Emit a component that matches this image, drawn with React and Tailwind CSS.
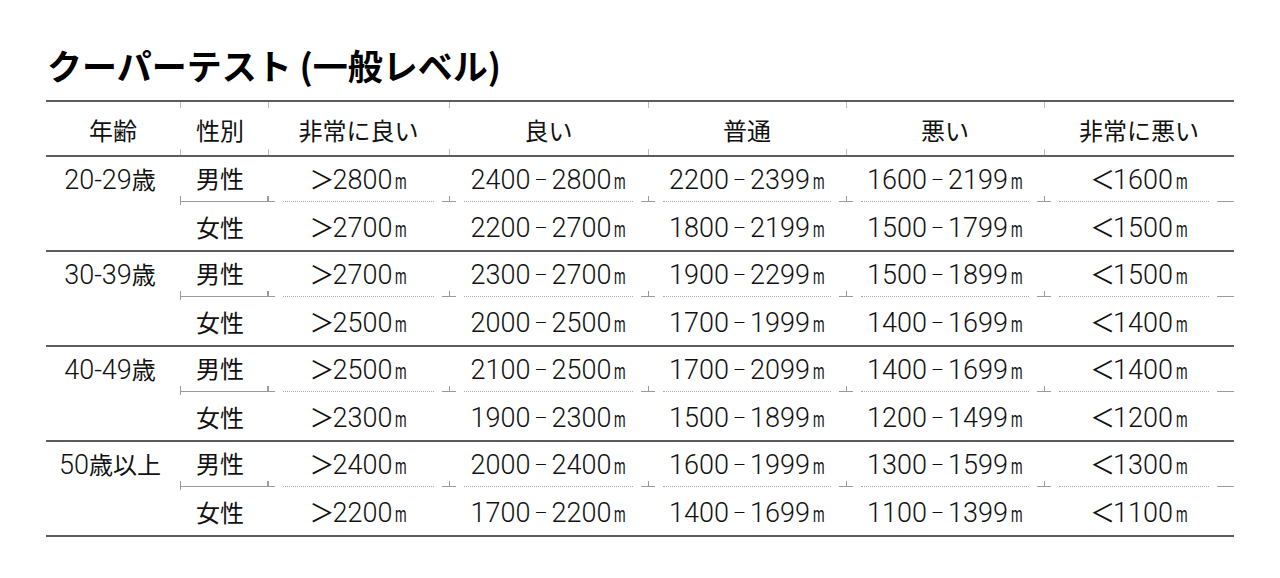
import React from "react";

// column widths of the table, measured from the picture
const cols = "grid grid-cols-[134px_88px_181px_199px_198px_198px_190px]";

const heads = ["年齢", "性別", "非常に良い", "良い", "普通", "悪い", "非常に悪い"];

const groups = [
  {
    age: "20-29歳",
    rows: [
      ["男性", ">2800", "2400-2800", "2200-2399", "1600-2199", "<1600"],
      ["女性", ">2700", "2200-2700", "1800-2199", "1500-1799", "<1500"],
    ],
  },
  {
    age: "30-39歳",
    rows: [
      ["男性", ">2700", "2300-2700", "1900-2299", "1500-1899", "<1500"],
      ["女性", ">2500", "2000-2500", "1700-1999", "1400-1699", "<1400"],
    ],
  },
  {
    age: "40-49歳",
    rows: [
      ["男性", ">2500", "2100-2500", "1700-2099", "1400-1699", "<1400"],
      ["女性", ">2300", "1900-2300", "1500-1899", "1200-1499", "<1200"],
    ],
  },
  {
    age: "50歳以上",
    rows: [
      ["男性", ">2400", "2000-2400", "1600-1999", "1300-1599", "<1300"],
      ["女性", ">2200", "1700-2200", "1400-1699", "1100-1399", "<1100"],
    ],
  },
];

// small condensed "m" unit
const Unit = () => (
  <span className="inline-block w-[12px] ml-[3px]">
    <span className="inline-block origin-left scale-x-[0.6] text-[22px] font-normal">m</span>
  </span>
);

const Value = ({ v }) => {
  if (v[0] === ">" || v[0] === "<") {
    return (
      <span className="flex items-baseline">
        <span className="text-[25px] mr-[-2px] font-normal">{v[0] === ">" ? "＞" : "＜"}</span>
        <span>{v.slice(1)}</span>
        <Unit />
      </span>
    );
  }
  const [a, b] = v.split("-");
  return (
    <span className="flex items-baseline">
      <span>{a}</span>
      <span className="text-[20px] mx-[4px] relative top-[-2px]">–</span>
      <span>{b}</span>
      <Unit />
    </span>
  );
};

// split age label into digit runs and kanji runs
const Age = ({ text }) => {
  const parts = text.match(/[0-9-]+|[^0-9-]+/g);
  return (
    <span className="flex items-baseline">
      {parts.map((p, i) =>
        /[0-9]/.test(p) ? (
          <span key={i}>{p}</span>
        ) : (
          <span key={i} className="text-[24px] font-normal">
            {p}
          </span>
        )
      )}
    </span>
  );
};

const Separator = () => (
  <div className={cols + " h-[9px]"}>
    <div />
    {/* gender column: solid line with end ticks */}
    <div className="flex flex-col">
      <div className="h-[6px] border-l border-r border-b border-[#9a9a9a]" />
      <div className="h-[3px] border-l border-[#9a9a9a]" />
    </div>
    {[0, 1, 2, 3, 4].map((i) => (
      <div key={i} className="flex h-[6px]">
        <div className="w-[7px] border-l border-b border-[#9a9a9a]" />
        <div className="w-[8px]" />
        <div className="flex-1 border-b border-dotted border-[#a8a8a8]" />
        <div className="w-[8px]" />
        <div
          className={
            i === 4 ? "w-[17px] border-b border-[#9a9a9a]" : "w-[7px] border-b border-[#9a9a9a]"
          }
        />
      </div>
    ))}
  </div>
);

const Row = ({ age, cells, first }) => (
  <div className={cols + (first ? " h-[39px] pt-[7px]" : " h-[45px] pt-[2px]")}>
    <div className="flex items-center justify-center pr-[6px]">{age && <Age text={age} />}</div>
    <div className="flex items-center justify-center pr-[8px] text-[24px] font-normal">{cells[0]}</div>
    {cells.slice(1).map((v, i) => (
      <div key={i} className="flex items-center justify-center">
        <Value v={v} />
      </div>
    ))}
  </div>
);

export default function App() {
  return (
    <div className="min-h-[578px] bg-white text-[#111] font-['Roboto','Noto_Sans_CJK_JP',sans-serif] text-[27px] font-light leading-none">
      <div className="pl-[46px] pt-[44px]">
        <h1 className="h-[41px] leading-[41px] pl-[1px] text-[35px] font-bold font-['Noto_Sans_CJK_JP',sans-serif] text-black">
          クーパーテスト (一般レベル)
        </h1>

        <div className="w-[1188px] mt-[15px]">
          <div className="h-[2px] bg-[#5c5c5c]" />

          {/* header */}
          <div className={cols + " h-[53px]"}>
            {heads.map((h, i) => (
              <div key={h} className="flex flex-col">
                <div className={i ? "h-[6px] border-l border-[#bdbdbd]" : "h-[6px]"} />
                <div
                  className={
                    "flex-1 flex items-center justify-center pt-[3px] text-[24px] font-normal font-['Noto_Sans_CJK_JP',sans-serif]" +
                    (i === 1 ? " pr-[8px]" : "")
                  }
                >
                  {h}
                </div>
                <div className={i ? "h-[6px] border-l border-[#bdbdbd]" : "h-[6px]"} />
              </div>
            ))}
          </div>

          {groups.map((g) => (
            <div key={g.age} className="border-t-2 border-[#5c5c5c]">
              <Row age={g.age} cells={g.rows[0]} first />
              <Separator />
              <Row cells={g.rows[1]} />
            </div>
          ))}
          <div className="h-[2px] bg-[#5c5c5c]" />
        </div>
      </div>
    </div>
  );
}
